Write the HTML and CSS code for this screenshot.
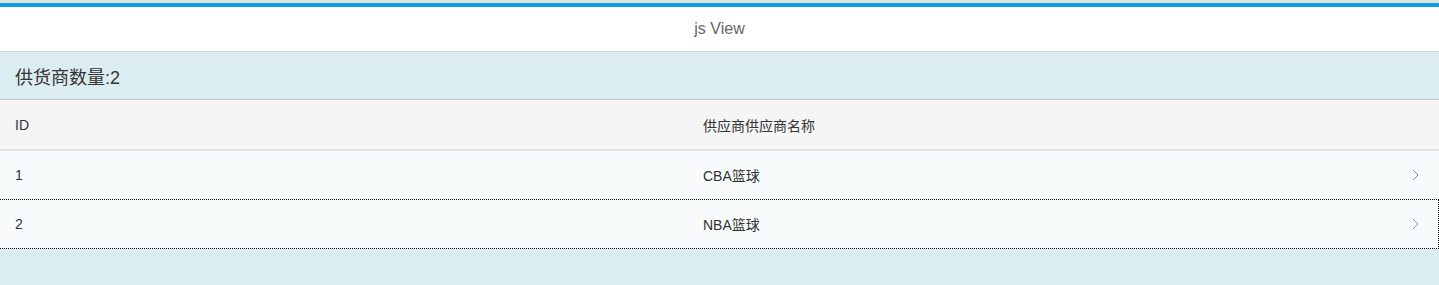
FILE: index.html
```html
<!DOCTYPE html>
<html lang="zh">
<head>
  <meta charset="UTF-8">
  <meta name="viewport" content="width=device-width, initial-scale=1.0">
  <title>js View</title>
  <link rel="stylesheet" href="styles.css">
</head>
<body>

  <!-- Otsikkopalkki -->
  <header class="topbar">js View</header>

  <!-- Luettelo -->
  <div class="summary">供货商数量:2</div>

  <div class="list">
    <div class="row head">
      <span>ID</span>
      <span>供应商供应商名称</span>
    </div>
    <div class="row item">
      <span>1</span>
      <span>CBA篮球</span>
      <svg class="arrow" width="7" height="12" viewBox="0 0 7 12"><polyline points="1,1 6,6 1,11" /></svg>
    </div>
    <div class="row item selected">
      <span>2</span>
      <span>NBA篮球</span>
      <svg class="arrow" width="7" height="12" viewBox="0 0 7 12"><polyline points="1,1 6,6 1,11" /></svg>
    </div>
  </div>

</body>
</html>
```

FILE: styles.css
```css
/* Perusasetukset */
body {
  margin: 0;
  padding: 3px 0 0;
  font-family: 'Liberation Sans', 'Noto Sans CJK SC', sans-serif;
  color: #333;
  background-color: #dcedf1;
  background-image: linear-gradient(#e2e2e2, #e2e2e2);
  background-size: 100% 3px;
  background-repeat: no-repeat;
}

/* Otsikkopalkki */
.topbar {
  height: 44px;
  display: flex;
  align-items: center;
  justify-content: center;
  background-color: white;
  border-top: 4px solid #069fdf;
  border-bottom: 1px solid #d4d4d4;
  color: #666;
  font-size: 16px;
}

.summary {
  height: 47px;
  display: flex;
  align-items: center;
  padding-left: 15px;
  font-size: 18px;
  color: #333;
  border-bottom: 1px solid #c9c9c9;
}

/* Luettelo */
.row {
  display: grid;
  grid-template-columns: 688px 1fr 7px;
  align-items: center;
  padding: 0 20px 0 15px;
  font-size: 14px;
  color: #333;
}

.head {
  height: 49px;
  background-color: #f5f5f5;
  border-bottom: 2px solid #e2e2e2;
}

.item {
  height: 48px;
  background-color: #f7fbfc;
}

.selected {
  border-top: 1px dotted #000;
  border-bottom: 1px dotted #000;
  border-right: 1px dotted #000;
  padding-right: 19px;
}

.arrow polyline {
  fill: none;
  stroke: #8a93a0;
  stroke-width: 1;
}
```
